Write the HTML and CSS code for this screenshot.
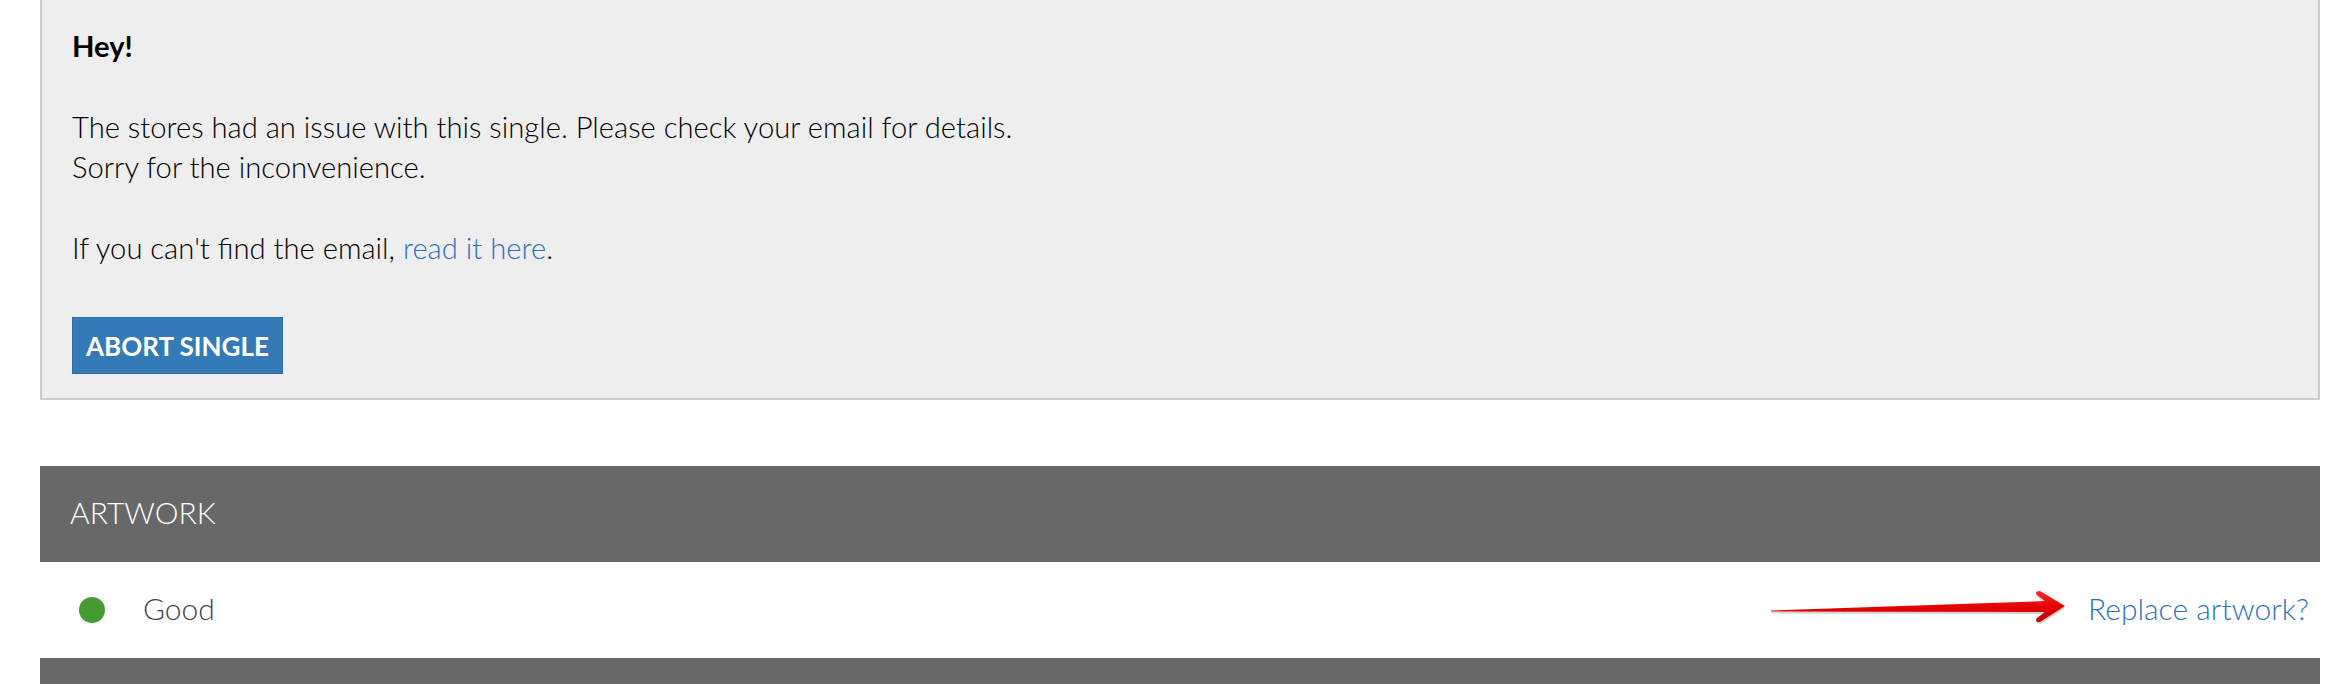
FILE: index.html
```html
<!DOCTYPE html>
<html lang="en">
<head>
<meta charset="utf-8">
<title>Single</title>
<link rel="stylesheet" href="styles.css">
</head>
<body>
<div class="page">
  <div class="notice">
    <p class="notice-title">Hey!</p>
    <p>The stores had an issue with this single. Please check your email for details.<br>Sorry for the inconvenience.</p>
    <p>If you can't find the email, <a class="link" href="#">read it here</a>.</p>
    <button class="btn-abort" type="button">ABORT SINGLE</button>
  </div>

  <section class="panel">
    <div class="panel-head">ARTWORK</div>
    <div class="panel-row">
      <div class="status">
        <span class="dot"></span>
        <span class="status-text">Good</span>
      </div>
      <div class="action">
        <svg class="arrow" width="298" height="38" viewBox="0 0 298 38" aria-hidden="true">
          <defs>
            <linearGradient id="rg" x1="0" y1="0" x2="0" y2="1">
              <stop offset="0" stop-color="#ff2a2a"/>
              <stop offset="0.5" stop-color="#e60000"/>
              <stop offset="1" stop-color="#c80000"/>
            </linearGradient>
          </defs>
          <path class="arrow-shadow" d="M2 23.5 L276 14 L268 8 Q266 4 272 4 L296 19 L272 35 Q266 35 268 31 L276 25 L2 24.5 Z"/>
          <path class="arrow-body" fill="url(#rg)" d="M2 21.5 L276 12 L268 6 Q265 2 271 2 L296 17 L271 33 Q265 33 268 29 L276 23 L2 22.5 Z"/>
        </svg>
        <a class="link replace" href="#">Replace artwork?</a>
      </div>
    </div>
    <div class="panel-head panel-head-next"></div>
  </section>
</div>
</body>
</html>
```
FILE: styles.css
```css
html, body {
  margin: 0;
  padding: 0;
  background: #ffffff;
}

body {
  font-family: Lato, "Open Sans", "Liberation Sans", sans-serif;
  color: #000;
  overflow: hidden;
}

.page {
  padding: 0 24px 0 40px;
}

.notice {
  background: #eeeeee;
  border: 2px solid #cccccc;
  border-top-width: 0;
  padding: 26px 30px 24px 30px;
  font-size: 29.2px;
  font-weight: 300;
  line-height: 40.5px;
}

.notice p {
  margin: 0 0 40px 0;
}

.notice .notice-title {
  font-weight: 700;
}

.notice p:last-of-type {
  margin-bottom: 49px;
}

.link {
  color: #3070c2;
  text-decoration: none;
}

.btn-abort {
  display: block;
  font-family: inherit;
  font-size: 26px;
  font-weight: 700;
  line-height: 40.5px;
  color: #ffffff;
  background: #337ab7;
  border: 1px solid #2e6da4;
  border-radius: 0;
  padding: 8px 13px 6px 13px;
  margin: 0;
}

.panel {
  margin-top: 66px;
}

.panel-head {
  background: #686868;
  color: #ffffff;
  font-size: 30px;
  font-weight: 300;
  line-height: 45px;
  padding: 24px 30px 27px 30px;
}

.panel-head-next {
  height: 45px;
}

.panel-row {
  display: flex;
  align-items: center;
  justify-content: space-between;
  height: 96px;
  box-sizing: border-box;
  padding: 0 11px 3px 39px;
  font-size: 30px;
  font-weight: 300;
  line-height: 45px;
}

.status {
  display: flex;
  align-items: center;
}

.dot {
  width: 26px;
  height: 26px;
  border-radius: 50%;
  background: #469a33;
  margin: 3px 38px 0 0;
}

.status-text {
  color: #444444;
}

.action {
  display: flex;
  align-items: center;
  gap: 21px;
}

.arrow {
  display: block;
  margin-top: 0;
}

.arrow-shadow {
  fill: #9a9a9a;
  opacity: 0.45;
}
```
